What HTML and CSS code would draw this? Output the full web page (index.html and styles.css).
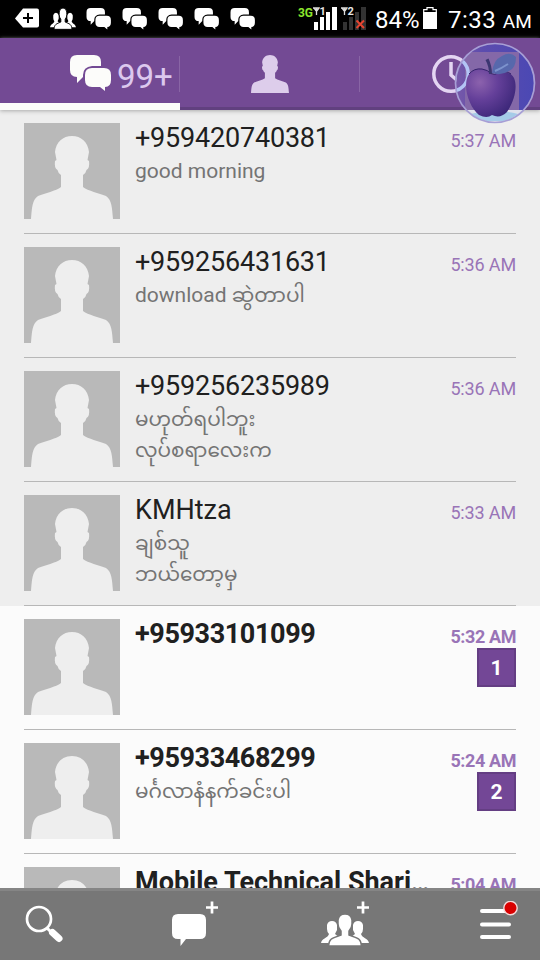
FILE: index.html
```html
<!DOCTYPE html>
<html lang="my">
<head>
<meta charset="utf-8">
<title>Messages</title>
<link rel="stylesheet" href="styles.css">
</head>
<body>
<svg class="defs" width="0" height="0" aria-hidden="true">
  <defs>
    <radialGradient id="apple" cx=".28" cy=".28" r=".8">
      <stop offset="0" stop-color="#8c62ad"/><stop offset=".45" stop-color="#65409a"/><stop offset="1" stop-color="#3c2779"/>
    </radialGradient>
    <linearGradient id="glass" x1="0" y1="0" x2="1" y2="0">
      <stop offset="0" stop-color="#7a5aa8"/><stop offset=".35" stop-color="#5c4cae"/><stop offset="1" stop-color="#4a48b4"/>
    </linearGradient>
    <symbol id="bust" viewBox="0 0 96 96">
      <path d="M7 96C8 85 8 77 14 73C21 70 32 68 37 64V52Q34 50 33.500 47Q30 45 31 38L32.500 37L31 29C32 19 39 13 48 13C57 13 64 19 65 29L63.500 37L65 38Q66 45 62.500 47Q62 50 59 52V64C64 68 75 70 82 73C88 77 88 85 89 96Z"/>
    </symbol>
    <symbol id="chats" viewBox="0 0 42 37">
      <path d="M7 0H24Q31 0 31 7V11H22Q13 12 13 20V22L7 28V22Q0 22 0 15V7Q0 0 7 0Z"/>
      <path d="M22 13H34Q41 13 41 20V25Q41 32 35 32V36L30 32H22Q15 32 15 25V20Q15 13 22 13Z"/>
    </symbol>
    <symbol id="group" viewBox="0 0 48 33" preserveAspectRatio="none">
      <path d="M0 29C1 24 7 24 8 20Q6 18 6 15V11Q7 7 11 7Q15 7 16 11V16L14 20L18 23L9 29ZM48 29C47 24 41 24 40 20Q42 18 42 15V11Q41 7 37 7Q33 7 32 11V16L34 20L30 23L39 29Z"/>
      <path class="group-front" d="M7.500 32C8 24 12 24 20 21V17Q17 14 17 10V6Q18 0 24 0Q30 0 31 6V10Q31 14 28 17V21C36 24 40 24 40.500 32Z"/>
    </symbol>
  </defs>
</svg>
<div class="screen">
  <header class="status">
    <div class="notices">
      <svg class="tag" viewBox="0 0 25 20"><path d="M8 0H22Q24 0 24 2V17Q24 19 22 19H8L0 10Z" fill="#fff"/><path d="M13 4.500V14.500M8 9.500H18" stroke="#000" stroke-width="2"/></svg>
      <svg class="people"><use href="#group"/></svg>
      <svg class="chat"><use href="#chats"/></svg>
      <svg class="chat"><use href="#chats"/></svg>
      <svg class="chat"><use href="#chats"/></svg>
      <svg class="chat"><use href="#chats"/></svg>
      <svg class="chat"><use href="#chats"/></svg>
    </div>
    <div class="system">
      <svg class="signal" width="70" height="26" viewBox="0 0 70 26">
        <text class="net" x="0" y="12" textLength="15" lengthAdjust="spacingAndGlyphs">3G</text>
        <path d="M15 3H22M16 3L18.500 6.500L21 3M18.500 3V10M43 3H50M44 3L46.500 6.500L49 3M46.500 3V10" fill="none" stroke="#ddd" stroke-width="1.300"/>
        <path d="M16 17H20V25H16ZM22 12H26V25H22ZM28 7H32V25H28ZM34 2H39V25H34Z" fill="#fff"/>
        <path d="M45 17H49V25H45ZM51 12H55V25H51ZM57 7H61V25H57ZM63 2H68V25H63Z" fill="#333"/>
        <text class="sim" x="21.500" y="10">1</text>
        <text class="sim" x="49.500" y="10">2</text>
        <path d="M58.500 15.500L66 23M66 15.500L58.500 23" stroke="#e54430" stroke-width="2"/>
      </svg>
      <span class="percent">84%</span>
      <svg class="battery" width="14" height="22" viewBox="0 0 14 22"><path d="M0 5H14V22H0Z" fill="#fff"/><path d="M.7 5V2.700H4V.7H10V2.700H13.300V5" fill="none" stroke="#fff" stroke-width="1.200"/></svg>
      <span class="clock">7:33 <small>AM</small></span>
    </div>
  </header>

  <nav class="tabs">
    <div class="tab active"><svg class="tab-chat"><use href="#chats"/></svg><span>99+</span></div>
    <div class="tab"><svg class="tab-person" viewBox="7 13 82 83" preserveAspectRatio="none"><use href="#bust" width="96" height="96"/></svg></div>
    <div class="tab"><svg class="tab-clock" viewBox="0 0 38 38"><circle cx="19" cy="19" r="17.200"/><path d="M19 7V20L27 27"/></svg></div>
    <svg class="floating" viewBox="0 0 82 82">
      <defs><clipPath id="disc"><circle cx="41" cy="41" r="39"/></clipPath></defs>
      <g clip-path="url(#disc)">
        <path d="M0 0H82V68H0Z" fill="url(#glass)"/>
        <path d="M11 10H65V68H11Z" fill="#8468a8"/>
        <path d="M0 68H82V82H0Z" fill="#dfe1ec"/>
        <path d="M16 72Q40 66 64 72L54 79H27Z" fill="#a5cbe8"/>
        <circle cx="-3" cy="32" r="17.200" fill="none" stroke="#b3c4f5" stroke-width="3.500"/>
      </g>
      <circle cx="41" cy="41" r="39.500" fill="none" stroke="#a79fd6" stroke-width="1.700"/>
      <path d="M35 30C30 25 18 25 13.500 35C9 47 16 66 25 73Q33 77 38 73Q46 77 53 70C60 60 64 45 60 36C56 28 44 29 40 33Q37 32 35 30Z" fill="url(#apple)"/>
      <path d="M15 32Q20 26 28 27Q34 28 37 31.500Q40 34 45 30.500Q52 28 57 32" fill="none" stroke="#34236b" stroke-width="1"/>
      <path d="M35 32Q35 24 31.500 18L34.500 16.500Q38 24 38 32Z" fill="#3b3670"/>
      <path d="M38 31Q39 18 48 14Q56 9 62 15Q62 26 55 29Q47 34 38 31Z" fill="#5768ac"/>
      <path d="M41 29Q48 26 54 22" fill="none" stroke="#7d93cd" stroke-width="2"/>
    </svg>
  </nav>

  <main class="list">
    <article class="row">
      <svg class="avatar"><use href="#bust"/></svg>
      <div class="body"><h2>+959420740381</h2><p>good morning</p></div>
      <div class="meta"><time>5:37 AM</time></div>
    </article>
    <article class="row">
      <svg class="avatar"><use href="#bust"/></svg>
      <div class="body"><h2>+959256431631</h2><p>download <span class="mm">ဆွဲတာပါ</span></p></div>
      <div class="meta"><time>5:36 AM</time></div>
    </article>
    <article class="row">
      <svg class="avatar"><use href="#bust"/></svg>
      <div class="body"><h2>+959256235989</h2><p class="mm">မဟုတ်ရပါဘူး<br>လုပ်စရာလေးက</p></div>
      <div class="meta"><time>5:36 AM</time></div>
    </article>
    <article class="row">
      <svg class="avatar"><use href="#bust"/></svg>
      <div class="body"><h2 class="name">KMHtza</h2><p class="mm">ချစ်သူ<br>ဘယ်တော့မှ</p></div>
      <div class="meta"><time>5:33 AM</time></div>
    </article>
    <article class="row unread">
      <svg class="avatar"><use href="#bust"/></svg>
      <div class="body"><h2>+95933101099</h2></div>
      <div class="meta"><time>5:32 AM</time><span class="count">1</span></div>
    </article>
    <article class="row unread">
      <svg class="avatar"><use href="#bust"/></svg>
      <div class="body"><h2>+95933468299</h2><p class="mm">မင်္ဂလာနံနက်ခင်းပါ</p></div>
      <div class="meta"><time>5:24 AM</time><span class="count">2</span></div>
    </article>
    <article class="row unread">
      <svg class="avatar"><use href="#bust"/></svg>
      <div class="body"><h2 class="name">Mobile Technical Shari<span class="dots">...</span></h2></div>
      <div class="meta"><time>5:04 AM</time></div>
    </article>
  </main>

  <footer class="toolbar">
    <svg width="40" height="50" viewBox="0 0 40 50"><circle cx="15" cy="18" r="12" fill="none" stroke="#fff" stroke-width="2.700"/><path d="M23 27L28 32" stroke="#fff" stroke-width="3"/><path d="M28.500 31.500L35 37.500" stroke="#fff" stroke-width="7" stroke-linecap="round"/></svg>
    <svg width="48" height="50" viewBox="0 0 48 50"><path d="M7 13H29Q35 13 35 19V32Q35 38 29 38H15L9.500 45V38H7Q1 38 1 32V19Q1 13 7 13Z" fill="#fff"/><path d="M41 .5V12.500M35 6.500H47" stroke="#fff" stroke-width="2.700"/></svg>
    <svg width="50" height="50" viewBox="0 0 50 50"><use href="#group" x="1" y="13" width="48" height="33"/><path d="M43 .5V12.500M37 6.500H49" stroke="#fff" stroke-width="2.700"/></svg>
    <svg width="44" height="50" viewBox="0 0 44 50"><path d="M6 10H33M6 23.500H33M6 36H33" stroke="#fff" stroke-width="4" stroke-linecap="round"/><circle cx="34.500" cy="7" r="6.700" fill="#d90000" stroke="#f4d9d9" stroke-width="1.400"/></svg>
  </footer>
</div>
</body>
</html>
```
FILE: styles.css
```css
* { box-sizing: border-box; }
body { margin: 0; font-family: Roboto, "Noto Sans", sans-serif; }
.defs { position: absolute; }
.screen { width: 540px; height: 960px; overflow: hidden; display: flex; flex-direction: column; background: #eee; }
svg { display: block; flex: none; }

.status { --bar: #000; height: 38px; flex: none; background: var(--bar); color: #fff; display: flex; justify-content: space-between; padding: 0 9px 0 15px; }
.notices { display: flex; gap: 10px; padding-top: 8px; fill: #fff; }
.tag { width: 25px; height: 21px; }
.people { width: 26px; height: 22px; }
.chat { width: 26px; height: 22px; }
.group-front { stroke: var(--bar); stroke-width: 1.5px; }
.system { display: flex; align-items: flex-start; }
.signal { margin-top: 5px; }
.net { font: bold 13px Roboto, sans-serif; fill: #8be52d; }
.sim { font: bold 11px Roboto, sans-serif; fill: #e5e5e5; stroke: #000; stroke-width: 1.5px; paint-order: stroke; }
.percent, .clock { font-size: 24px; line-height: 40px; white-space: nowrap; }
.percent { width: 45px; margin-left: 7px; }
.battery { margin: 7px 11px 0 3px; }
.clock { width: 83px; letter-spacing: .5px; }
.clock small { font-size: 19px; letter-spacing: 0; }

.tabs { height: 72px; flex: none; position: relative; z-index: 1; display: grid; grid-template-columns: repeat(3, 1fr); background: #734a94; box-shadow: 0 1px 4px #aaa; }
.tab { display: flex; border-bottom: 3px solid #61407f; background: linear-gradient(#8965a5, #8965a5) right 18px / 1px 36px no-repeat; }
.tab:nth-child(3) { background: none; }
.tab.active { border-bottom: 7px solid #fcfcfa; padding: 17px 0 0 70px; }
.tab-chat { width: 42px; height: 37px; fill: #fcfcfa; }
.tab.active span { color: #dcc8ee; font-size: 33px; line-height: 43px; margin-left: 5px; }
.tab-person { width: 38px; height: 38px; margin: 17px 0 0 71px; fill: #ddcdeb; }
.tab-clock { width: 38px; height: 38px; margin: 17px 0 0 72px; fill: none; stroke: #e4d5f2; stroke-width: 3.5px; }
.floating { width: 82px; height: 82px; position: absolute; left: 454px; top: 4px; }

.list { height: 778px; flex: none; overflow: hidden; }
.row { height: 124px; padding: 13px 24px 0; display: flex; background: linear-gradient(#b7b7b7, #b7b7b7) 24px 123px / 492px 1px no-repeat #eee; }
.row.unread { background-color: #fbfbfb; }
.avatar { width: 96px; height: 96px; background: #b9b9b9; fill: #eee; }
.body { flex: 1; min-width: 0; margin-left: 15px; }
h2 { margin: 0; font-size: 27px; line-height: 30px; font-weight: 400; color: #202020; white-space: nowrap; letter-spacing: -.2px; }
h2.name { letter-spacing: 0; }
.unread h2 { font-weight: 700; letter-spacing: -.4px; }
.unread h2.name { letter-spacing: 0; }
.dots { font-weight: 400; color: #777; position: relative; top: -1px; letter-spacing: -1.5px; }
p { margin: 3px 0 0; font-size: 21px; line-height: 30px; color: #747474; white-space: nowrap; }
.mm { font-family: Roboto, "Noto Sans Myanmar", Padauk, "Noto Sans", sans-serif; font-size: 20px; line-height: 31px; }
span.mm { line-height: 1; }
.meta { width: 70px; display: flex; flex-direction: column; align-items: flex-end; }
time { font-size: 18px; line-height: 36px; height: 29px; color: #9974b7; white-space: nowrap; letter-spacing: -.15px; }
.unread time { font-weight: 700; letter-spacing: -.4px; }
.count { width: 39px; height: 39px; background: #734796; border: 2px solid #643e83; color: #fff; font-size: 21px; line-height: 37px; font-weight: 700; text-align: center; }

.toolbar { --bar: #777; height: 72px; flex: none; background: var(--bar); border-top: 3px solid #858585; display: grid; grid-template-columns: 146px 149px 157px 40px; padding: 10px 20px 0 24px; fill: #fff; }
.toolbar svg:nth-child(2), .toolbar svg:nth-child(3) { margin-left: 1px; }
```
